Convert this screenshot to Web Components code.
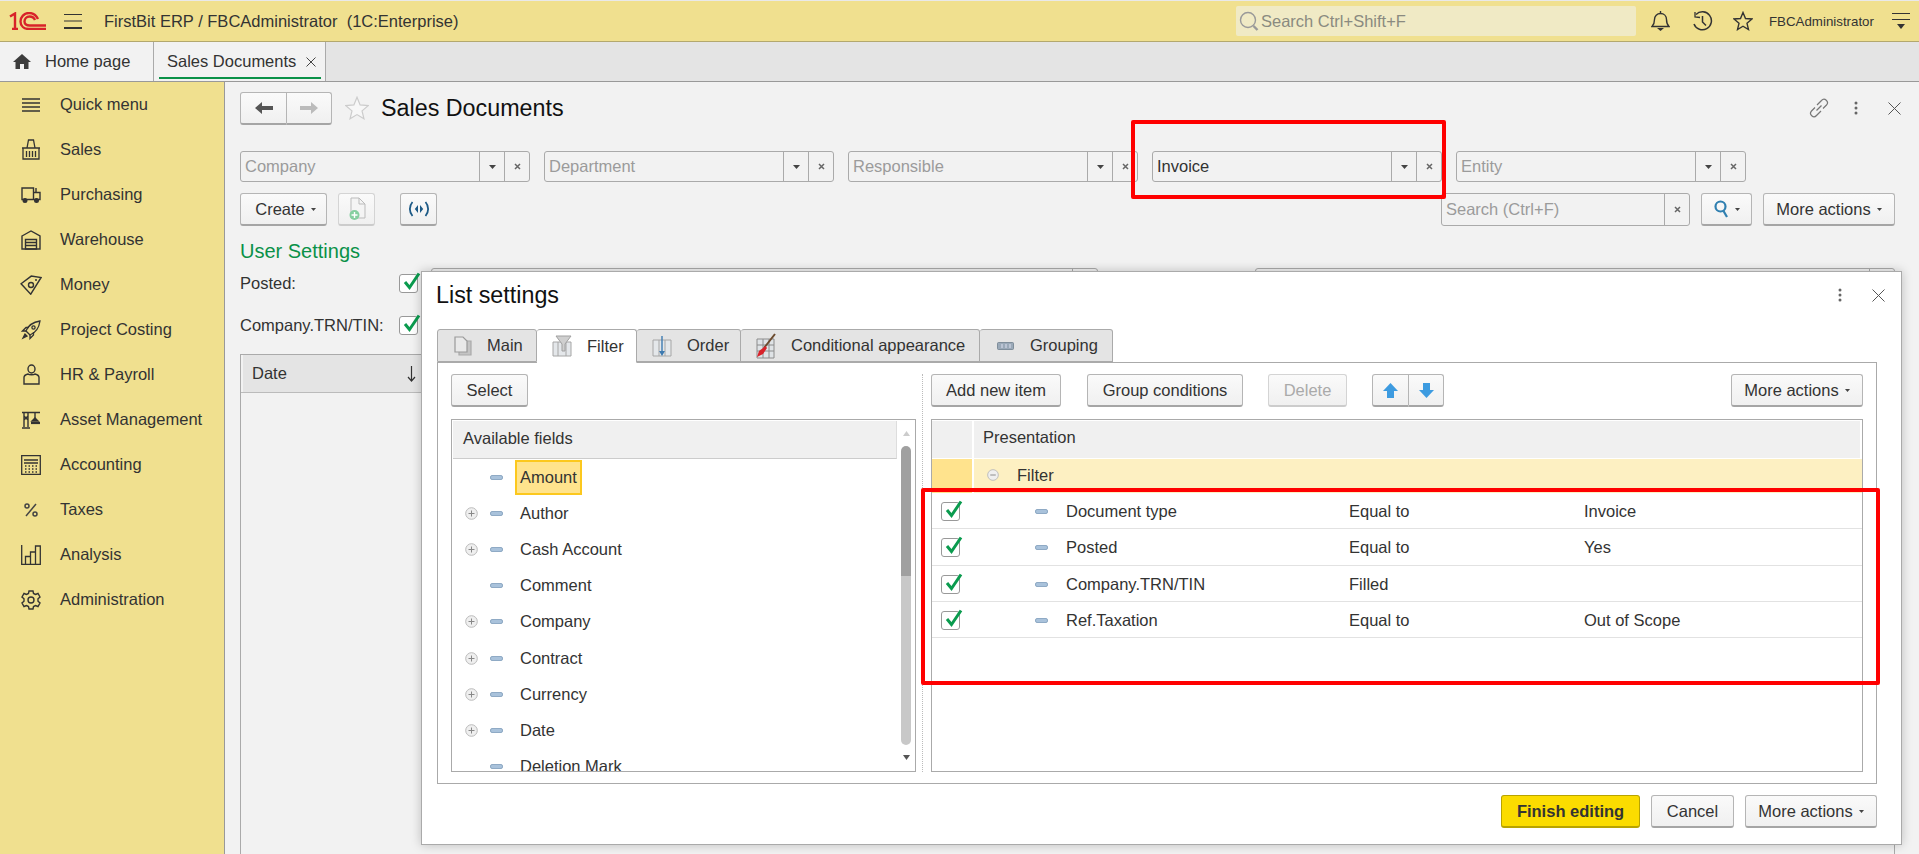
<!DOCTYPE html>
<html lang="en">
<head>
<meta charset="utf-8">
<title>Sales Documents</title>
<style>
    html, body { margin: 0; height: 100%; overflow: hidden; }
    body { font: 16.5px "Liberation Sans", Arial, sans-serif; color: #333; }
</style>
</head>
<body>
<erp-app>
    <erp-header slot="header"></erp-header>
    <erp-tabbar slot="tabs"></erp-tabbar>
    <erp-sidebar slot="side">
        <erp-nav-item icon="list">Quick menu</erp-nav-item>
        <erp-nav-item icon="basket">Sales</erp-nav-item>
        <erp-nav-item icon="truck">Purchasing</erp-nav-item>
        <erp-nav-item icon="warehouse">Warehouse</erp-nav-item>
        <erp-nav-item icon="money">Money</erp-nav-item>
        <erp-nav-item icon="rocket">Project Costing</erp-nav-item>
        <erp-nav-item icon="person">HR &amp; Payroll</erp-nav-item>
        <erp-nav-item icon="crane">Asset Management</erp-nav-item>
        <erp-nav-item icon="calc">Accounting</erp-nav-item>
        <erp-nav-item icon="percent">Taxes</erp-nav-item>
        <erp-nav-item icon="chart">Analysis</erp-nav-item>
        <erp-nav-item icon="gear">Administration</erp-nav-item>
    </erp-sidebar>
    <erp-document slot="main"></erp-document>
    <settings-dialog slot="overlay"></settings-dialog>
    <red-box slot="overlay" style="left:1131px;top:120px;width:315px;height:79px"></red-box>
    <red-box slot="overlay" style="left:921px;top:488px;width:959px;height:197px"></red-box>
</erp-app>

<script>
const icons = {
    logo: `<svg width="37" height="18" viewBox="0 0 37 18" fill="none" stroke="#d8232a" stroke-width="2.400"><path d="M1 4.500 6 1.500V17M3 17H9"/><path d="M29 7C27 3 24 1 20 1 15 1 11.500 5 11.500 9.500 11.500 14 15 17 20 17H37"/><path d="M26 8C25 5.500 23 4.500 20.500 4.500 17.500 4.500 15.500 7 15.500 9.500 15.500 12 17.500 13.500 20.500 13.500H37"/></svg>`,
    burger: `<svg width="18" height="15" viewBox="0 0 18 15" stroke="#333" fill="none"><path d="M0 .5H18M0 7H18"/><path stroke-width="2" d="M0 14H18"/></svg>`,
    search: `<svg width="21" height="21" viewBox="0 0 21 21" fill="none" stroke="#999" stroke-width="1.400"><circle cx="9" cy="9" r="7.500"/><path stroke-width="2.400" d="m14.500 15 4 4"/></svg>`,
    bell: `<svg width="19" height="20" viewBox="0 0 19 20" fill="none" stroke="#333" stroke-width="1.400"><path d="M1 15.500C3 13.500 3.500 11 3.500 8.500 3.500 5 6 2.500 9.500 2.500S15.500 5 15.500 8.500C15.500 11 16 13.500 18 15.500Z"/><path d="M9.500 0v2.500"/><path fill="#333" stroke="none" d="M6 17h7l-3.500 3z"/></svg>`,
    history: `<svg width="21" height="21" viewBox="0 0 21 21" fill="none" stroke="#333" stroke-width="1.500"><path d="M4 3.500A9 9 0 1 1 2 13"/><path d="M3 1v5l5 .5" stroke-width="1.300"/><path d="M10.500 5v6l3.500 3.500"/></svg>`,
    star: `<svg width="20" height="20" viewBox="0 0 20 20" fill="none" stroke="#333" stroke-width="1.400"><path d="M10 1.500 12.500 7.500 19 8 14 12.300 15.500 18.500 10 15.200 4.500 18.500 6 12.300 1 8 7.500 7.500Z"/></svg>`,
    starLight: `<svg width="24" height="24" viewBox="0 0 20 20" fill="#f7f7f7" stroke="#ccc" stroke-width="1"><path d="M10 1 12.600 7.400 19.300 8 14.200 12.400 15.800 19 10 15.500 4.200 19 5.800 12.400 .7 8 7.400 7.400Z"/></svg>`,
    menu: `<svg width="19" height="17" viewBox="0 0 19 17" fill="#333" stroke="#333"><path fill="none" d="M1 .5H19M1 6.500H19"/><path stroke="none" d="M6 11h8l-4 5z"/></svg>`,
    home: `<svg width="18" height="15" viewBox="0 0 18 15" fill="#3c3c3c"><path d="M9 0 18 8H15.500V15H11V10H7V15H2.500V8H0Z"/></svg>`,
    close: `<svg width="10" height="10" viewBox="0 0 10 10" stroke="#444" fill="none"><path d="M.5.5 9.500 9.500M9.500.5.5 9.500"/></svg>`,
    closeBig: `<svg width="13" height="13" viewBox="0 0 13 13" stroke="#555" fill="none"><path d="M.5.5 12.500 12.500M12.500.5.5 12.500"/></svg>`,
    dots: `<svg width="4" height="14" viewBox="0 0 4 14" fill="#666"><circle cx="2" cy="2" r="1.500"/><circle cx="2" cy="7" r="1.500"/><circle cx="2" cy="12" r="1.500"/></svg>`,
    link: `<svg width="20" height="20" viewBox="0 0 20 20" fill="none" stroke="#777" stroke-width="1.200"><path d="M8 7 12.500 2.500A3 3 0 0 1 17.500 7L14 10.500"/><path d="M12 13 7.500 17.500A3 3 0 0 1 2.500 13L6 9.500"/><path d="M7.500 12.500 12.500 7.500"/></svg>`,
    list: `<svg width="18" height="14" viewBox="0 0 18 14" stroke="#333" stroke-width="1.500"><path d="M0 1H18M0 5H18M0 9H18M0 13H18"/></svg>`,
    basket: `<svg width="20" height="21" viewBox="0 0 20 21" fill="none" stroke="#333" stroke-width="1.300"><path d="M1 9H19M2 9V20H18V9"/><path d="M6 9 7.500 1H12.500L14 9"/><path d="M5.500 12V18M8.500 12V18M11.500 12V18M14.500 12V18"/></svg>`,
    truck: `<svg width="20" height="16" viewBox="0 0 20 16" fill="none" stroke="#333" stroke-width="1.400"><path d="M12.500 12.500H1V1H12.500V12.500H19V5.500H12.500M15 1V5.500"/><circle cx="4" cy="13.500" r="1.800" fill="#333"/><circle cx="15.500" cy="13.500" r="1.800" fill="#333"/></svg>`,
    warehouse: `<svg width="20" height="20" viewBox="0 0 20 20" fill="none" stroke="#333" stroke-width="1.400"><path d="M1 6 10 1 19 6V19H1Z"/><path d="M4.500 9.500H15.500V19H4.500ZM4.500 12.500H15.500M4.500 15.500H15.500"/></svg>`,
    money: `<svg width="22" height="20" viewBox="0 0 22 20" fill="none" stroke="#333" stroke-width="1.400"><path d="M1 10 10 1H20L12 19Z" transform="rotate(8 10 10)"/><circle cx="11" cy="10" r="2.500"/><path d="M15 5h2"/></svg>`,
    rocket: `<svg width="20" height="20" viewBox="0 0 20 20" fill="none" stroke="#333" stroke-width="1.300"><path d="M7 13 5 11C7 6 12 2 19 1 18 8 14 13 9 15Z"/><path d="M5 11H1.500L5 7.500H8M9 15V18.500L12.500 15V12"/><circle cx="12.500" cy="7.500" r="1.600"/><path fill="#333" d="M4 14 2 18 6 16Z"/></svg>`,
    person: `<svg width="17" height="21" viewBox="0 0 17 21" fill="none" stroke="#333" stroke-width="1.400"><ellipse cx="8.500" cy="5" rx="3.500" ry="4"/><path d="M1 20V13.500C1 11.500 3 10.500 5 10 6 11 11 11 12 10 14 10.500 16 11.500 16 13.500V20Z"/></svg>`,
    crane: `<svg width="20" height="18" viewBox="0 0 20 18" fill="none" stroke="#333" stroke-width="1.400"><path d="M1 1.500H19M3 1.500V16M7 1.500V16M1 17H9M3 5 7 9M7 5 3 9"/><path d="M14 1.500V7" /><path fill="#333" d="M11 10 14 7 17 10Z"/><path stroke-width="2.200" d="M10 12H19"/></svg>`,
    calc: `<svg width="20" height="20" viewBox="0 0 20 20" fill="none" stroke="#333" stroke-width="1.300"><path d="M.7.7H19.300V19.300H.7ZM3 5H17M3 8H17"/><path stroke-dasharray="1.500 2" stroke-width="1.500" d="M4 11H17M4 14H17M4 17H17"/></svg>`,
    percent: `<svg width="14" height="14" viewBox="0 0 14 14" fill="none" stroke="#444" stroke-width="1.500"><circle cx="3" cy="3" r="2"/><circle cx="11" cy="11" r="2"/><path d="M12 1 2 13"/></svg>`,
    chart: `<svg width="20" height="20" viewBox="0 0 20 20" fill="none" stroke="#333" stroke-width="1.300"><path d="M.7 0V19.300H19.300V1H14.500V19.300M14.500 7H9.500V19.300M9.500 11.500H4.500V19.300"/></svg>`,
    gear: `<svg width="20" height="20" viewBox="0 0 20 20" fill="none" stroke="#333" stroke-width="1.400"><path d="M8 1H12L12.500 3.500 14.500 4.500 17 3.500 19 7 17 8.700V11.300L19 13 17 16.500 14.500 15.500 12.500 16.500 12 19H8L7.500 16.500 5.500 15.500 3 16.500 1 13 3 11.300V8.700L1 7 3 3.500 5.500 4.500 7.500 3.500Z"/><circle cx="10" cy="10" r="3"/></svg>`,
    caret: `<svg width="7" height="4" viewBox="0 0 7 4" fill="#444"><path d="M0 0H7L3.500 4Z"/></svg>`,
    caretSm: `<svg width="5" height="3" viewBox="0 0 5 3" fill="#444"><path d="M0 0H5L2.500 3Z"/></svg>`,
    mini: `<svg width="7" height="7" viewBox="0 0 7 7" stroke="#666" stroke-width="1.500" fill="none"><path d="M1 1 6 6M6 1 1 6"/></svg>`,
    back: `<svg width="18" height="12" viewBox="0 0 18 12" fill="#555"><path d="M0 6 7 0V4H18V8H7V12Z"/></svg>`,
    forward: `<svg width="18" height="12" viewBox="0 0 18 12" fill="#bbb"><path d="M18 6 11 0V4H0V8H11V12Z"/></svg>`,
    docAdd: `<svg width="18" height="24" viewBox="0 0 18 24" fill="none"><path d="M3 1H11L17 7V21H3Z" stroke="#bbb" fill="#f4f4f4"/><path d="M11 1V7H17" stroke="#bbb"/><circle cx="6.500" cy="18" r="5" fill="#86cfa0"/><path d="M6.500 15V21M3.500 18H9.500" stroke="#fff" stroke-width="1.400"/></svg>`,
    signal: `<svg width="22" height="16" viewBox="0 0 22 16" fill="none" stroke="#1d5a86" stroke-width="1.800"><path d="M4.500 1C1 5 1 11 4.500 15M17.500 1C21 5 21 11 17.500 15"/><path fill="#1d5a86" stroke="none" d="M10 4 6.800 8 10 12ZM12 4 15.200 8 12 12Z"/></svg>`,
    magnifier: `<svg width="15" height="18" viewBox="0 0 15 18" fill="none" stroke="#2f7fb0" stroke-width="2.200"><circle cx="6.500" cy="6.500" r="5"/><path d="m9.500 11 3.500 6"/></svg>`,
    sortDown: `<svg width="9" height="16" viewBox="0 0 9 16" fill="none" stroke="#333" stroke-width="1.200"><path d="M4.500 0V15M1 11 4.500 15 8 11"/></svg>`,
    tabMain: `<svg width="18" height="20" viewBox="0 0 18 20" fill="#e9e9e9" stroke="#9a9a9a" stroke-width="1.200"><path d="M5 5H17V19H5Z" fill="#c4c4c4" stroke="#aaa"/><path d="M1 1H9L13 5V16H1Z"/></svg>`,
    tabFilter: `<svg width="20" height="22" viewBox="0 0 20 22" fill="#e4e7ea" stroke="#a6a6a6"><path d="M1 7H19V21H1ZM6 7V21M14 7V21"/><path fill="#cfcfcf" stroke="#a0a0a0" d="M4 1H19L13 9V16H10V9Z"/></svg>`,
    tabOrder: `<svg width="20" height="22" viewBox="0 0 20 22" fill="#e4e7ea" stroke="#a6a6a6"><path d="M1 5H19V21H1ZM7 5V21M13 5V21"/><path stroke="#3d7ab0" stroke-width="1.400" fill="none" d="M10 1V19"/><path fill="#3d7ab0" stroke="none" d="M7 16H13L10 21Z"/></svg>`,
    tabCond: `<svg width="20" height="26" viewBox="0 0 20 26" fill="#dfe3e6" stroke="#8c8c8c"><path d="M1 6H18V25H1ZM7 6V25M13 6V25M1 12H18M1 18H18"/><path stroke="#6b4a2d" stroke-width="2" fill="none" d="M19 1 8 15"/><path fill="#d8222a" stroke="none" d="M9.500 13 3 18 1 24 7 21 11 15Z"/></svg>`,
    tabGroup: `<svg width="17" height="8" viewBox="0 0 17 8" fill="#9aa9b8" stroke="#6f7f8e" stroke-width=".8"><rect x=".5" y=".5" width="16" height="7" rx="1"/><path stroke="#eef" d="M5 2V6M9 2V6M13 2V6"/></svg>`,
    plus: `<svg width="13" height="13" viewBox="0 0 13 13" fill="#efefef" stroke="#bbb"><circle cx="6.500" cy="6.500" r="5.800"/><path stroke="#888" d="M6.500 3.500V9.500M3.500 6.500H9.500"/></svg>`,
    minus: `<svg width="12" height="12" viewBox="0 0 13 13" fill="#efefef" stroke="#bbb"><circle cx="6.500" cy="6.500" r="5.800"/><path stroke="#888" d="M3.500 6.500H9.500"/></svg>`,
    dash: `<svg width="13" height="5" viewBox="0 0 13 5" fill="#a9c2db" stroke="#7d9cba" stroke-width=".8"><rect x=".5" y=".5" width="12" height="4" rx="1.500"/></svg>`,
    up: `<svg width="15" height="15" viewBox="0 0 15 15" fill="#3d9be0"><path d="M7.500 0 15 8H11V15H4V8H0Z"/></svg>`,
    down: `<svg width="15" height="15" viewBox="0 0 15 15" fill="#3d9be0"><path d="M7.500 15 15 7H11V0H4V7H0Z"/></svg>`,
    check: `<svg width="18" height="19" viewBox="0 0 18 19" fill="none" stroke="#0a9b4e" stroke-width="3"><path d="M2 10 6.500 15.500 16 1.500"/></svg>`,
    scrollUp: `<svg width="7" height="5" viewBox="0 0 7 5" fill="#ccc"><path d="M0 5H7L3.500 0Z"/></svg>`,
    scrollDown: `<svg width="7" height="5" viewBox="0 0 7 5" fill="#555"><path d="M0 0H7L3.500 5Z"/></svg>`,
};

class ShadowEl extends HTMLElement {
    constructor() {
        super();
        this.attachShadow({ mode: "open" });
    }
    connectedCallback() {
        this.shadowRoot.innerHTML = `<style>${this.styles()}</style>${this.markup()}`;
    }
    styles() { return ":host { display: block; }"; }
    markup() { return "<slot></slot>"; }
}

class ErpApp extends ShadowEl {
    styles() {
        return `
            :host { display: flex; flex-direction: column; position: relative; height: 854px; overflow: hidden;
                padding-top: 1px; box-sizing: border-box; background: #e9e9e9; }
            .body { flex: 1; display: flex; min-height: 0; }
        `;
    }
    markup() {
        return `<slot name="header"></slot><slot name="tabs"></slot>
            <div class="body"><slot name="side"></slot><slot name="main"></slot></div>
            <slot name="overlay"></slot>`;
    }
}

class ErpHeader extends ShadowEl {
    styles() {
        return `
            :host { display: flex; align-items: center; height: 41px; box-sizing: border-box; background: #f0e08f;
                border-bottom: 1px solid #b3a86e; padding: 0 9px; color: #333; }
            svg { display: block; flex: none; }
            .burger { margin-left: 18px; }
            .title { margin-left: 22px; white-space: pre; }
            .search { margin-left: auto; width: 400px; height: 30px; background: #f0eac5; border-radius: 2px; display: flex;
                align-items: center; padding-left: 3px; box-sizing: border-box; color: #8a8a80; gap: 1px; }
            .bell { margin-left: 15px; }
            .history { margin-left: 22px; }
            .star { margin-left: 20px; }
            .user { margin-left: 16px; font-size: 13.300px; width: 122px; white-space: nowrap; }
        `;
    }
    markup() {
        return `${icons.logo}<span class="burger">${icons.burger}</span>
            <span class="title">FirstBit ERP / FBCAdministrator  (1C:Enterprise)</span>
            <div class="search">${icons.search}<span>Search Ctrl+Shift+F</span></div>
            <span class="bell">${icons.bell}</span><span class="history">${icons.history}</span>
            <span class="star">${icons.star}</span><span class="user">FBCAdministrator</span>${icons.menu}`;
    }
}

class ErpTabbar extends ShadowEl {
    styles() {
        return `
            :host { display: flex; height: 40px; box-sizing: border-box; background: #e4e4e4; border-bottom: 1px solid #999; }
            .tab { display: flex; align-items: center; background: #f2f2f2; border-right: 1px solid #aaa; box-sizing: border-box; position: relative; }
            .home { width: 154px; padding-left: 13px; gap: 14px; }
            .docs { width: 172px; padding-left: 13px; gap: 10px; }
            .docs::after { content: ""; position: absolute; left: 5px; right: 4px; bottom: 2px; height: 2px; background: #0a9148; }
        `;
    }
    markup() {
        return `<div class="tab home">${icons.home}<span>Home page</span></div>
            <div class="tab docs"><span>Sales Documents</span>${icons.close}</div>`;
    }
}

class ErpSidebar extends ShadowEl {
    styles() {
        return `:host { display: block; flex: none; width: 225px; box-sizing: border-box; background: #f0e08f; border-right: 1px solid #999; }`;
    }
}

class ErpNavItem extends ShadowEl {
    styles() {
        return `
            :host { display: flex; align-items: center; height: 45px; padding-left: 20px; gap: 18px; }
            .ico { width: 22px; display: flex; justify-content: center; }
            svg { display: block; }
        `;
    }
    markup() {
        return `<span class="ico">${icons[this.getAttribute("icon")]}</span><slot></slot>`;
    }
}

class ErpButton extends ShadowEl {
    styles() {
        const w = this.getAttribute("width");
        return `
            :host { display: flex; align-items: center; justify-content: center; flex: none; height: 33px; box-sizing: border-box;
                ${w ? `width: ${w}px;` : ""} gap: 6px; white-space: nowrap; color: #333;
                background: linear-gradient(#fafafa, #f0f0f0); border: 1px solid #b5b5b5; border-bottom: 2px solid #a5a5a5; border-radius: 3px; }
            :host([disabled]) { color: #aaa; border-color: #d4d4d4; border-bottom-color: #ccc; }
            :host([primary]) { background: #fbdc00; border-color: #b8a300; font-weight: 700; }
            svg { display: block; }
        `;
    }
    markup() {
        return `<slot></slot>${this.hasAttribute("caret") ? icons.caretSm : ""}`;
    }
}

class ErpField extends ShadowEl {
    styles() {
        const w = this.getAttribute("width") || 290;
        return `
            :host { display: flex; flex: none; width: ${w}px; height: 31px; box-sizing: border-box; border: 1px solid #aaa; border-radius: 3px; }
            .text { flex: 1; display: flex; align-items: center; padding-left: 4px; color: #9b9b9b; }
            :host([filled]) .text { color: #333; }
            .btn { width: 25px; display: flex; align-items: center; justify-content: center; border-left: 1px solid #aaa; box-sizing: border-box; }
        `;
    }
    markup() {
        const drop = this.hasAttribute("nodrop") ? "" : `<span class="btn">${icons.caret}</span>`;
        return `<span class="text">${this.getAttribute("label") || ""}</span>${drop}<span class="btn">${icons.mini}</span>`;
    }
}

class ErpCheck extends ShadowEl {
    styles() {
        return `
            :host { display: block; flex: none; width: 19px; height: 19px; box-sizing: border-box; position: relative; background: #fff;
                border: 1px solid #999; border-radius: 3px; }
            svg { position: absolute; left: 3px; top: -3px; }
        `;
    }
    markup() { return icons.check; }
}

class ErpDocument extends ShadowEl {
    styles() {
        return `
            :host { display: flex; flex-direction: column; flex: 1; min-width: 0; box-sizing: border-box; background: #f2f2f2;
                padding: 11px 24px 0 15px; }
            svg { display: block; }
            .head { display: flex; align-items: center; height: 30px; }
            .nav { display: flex; }
            .nav erp-button:first-child { border-radius: 3px 0 0 3px; }
            .nav erp-button:last-child { border-radius: 0 3px 3px 0; border-left: 0; }
            .fav { margin-left: 13px; }
            h1 { margin: 0 0 0 12px; font: 400 23.300px "Liberation Sans", Arial, sans-serif; color: #111; }
            .tools { margin-left: auto; margin-right: -6px; display: flex; align-items: center; }
            .tools svg:nth-child(2) { margin: 0 30px 0 25px; }
            .row { display: flex; gap: 14px; margin-top: 28px; }
            .actions { display: flex; align-items: center; margin-top: 11px; }
            .actions .right { margin-left: auto; display: flex; align-items: center; gap: 11px; }
            h2 { margin: 14px 0 0; font: 400 20px/22px "Liberation Sans", Arial, sans-serif; color: #0a9148; }
            .set { display: flex; align-items: center; height: 33px; }
            .set span { width: 159px; }
        `;
    }
    markup() {
        return `
            <div class="head">
                <div class="nav"><erp-button width="47">${icons.back}</erp-button><erp-button width="45">${icons.forward}</erp-button></div>
                <span class="fav">${icons.starLight}</span>
                <h1>Sales Documents</h1>
                <div class="tools">${icons.link}${icons.dots}${icons.closeBig}</div>
            </div>
            <div class="row">
                <erp-field label="Company"></erp-field>
                <erp-field label="Department"></erp-field>
                <erp-field label="Responsible"></erp-field>
                <erp-field label="Invoice" filled></erp-field>
                <erp-field label="Entity"></erp-field>
            </div>
            <div class="actions">
                <erp-button width="87" caret style="padding-left:4px">Create</erp-button>
                <erp-button width="37" disabled style="margin-left:11px">${icons.docAdd}</erp-button>
                <erp-button width="37" style="margin-left:25px">${icons.signal}</erp-button>
                <div class="right">
                    <erp-field label="Search (Ctrl+F)" width="249" nodrop style="height:33px"></erp-field>
                    <erp-button width="51" caret>${icons.magnifier}</erp-button>
                    <erp-button width="132" caret>More actions</erp-button>
                </div>
            </div>
            <h2>User Settings</h2>
            <div class="set" style="margin-top:5px">
                <span>Posted:</span><erp-check></erp-check>
                <erp-field width="667" nodrop style="margin-left:13px"></erp-field>
                <erp-field width="640" nodrop style="margin-left:157px"></erp-field>
            </div>
            <div class="set" style="margin-top:9px"><span>Company.TRN/TIN:</span><erp-check></erp-check></div>
            <erp-list style="margin-top:12px"></erp-list>
        `;
    }
}

class ErpList extends ShadowEl {
    styles() {
        return `
            :host { display: block; flex: 1; border: 1px solid #aaa; border-bottom: 0; padding-left: 2px; }
            .cell { width: 300px; height: 37px; box-sizing: border-box; background: #e4e4e4; display: flex; align-items: center; padding-left: 9px; }
            .cell span { width: 155px; }
            hr { margin: 0 0 0 -2px; border: 0; border-top: 1px solid #bbb; }
        `;
    }
    markup() {
        return `<div class="cell"><span>Date</span>${icons.sortDown}</div><hr>`;
    }
}

class SettingsDialog extends ShadowEl {
    styles() {
        return `
            :host { display: flex; flex-direction: column; position: absolute; left: 421px; top: 271px; width: 1481px; height: 574px;
                box-sizing: border-box; background: #fff; border: 1px solid #aaa; box-shadow: 0 0 10px rgba(0,0,0,.22); }
            svg { display: block; }
            .top { display: flex; align-items: center; height: 46px; margin-bottom: 11px; padding: 0 16px 0 14px; flex: none; }
            h1 { margin: 0; font: 400 23.300px "Liberation Sans", Arial, sans-serif; color: #111; }
            .tools { margin-left: auto; display: flex; align-items: center; gap: 30px; }
            .tabs { display: flex; margin-left: 15px; flex: none; position: relative; z-index: 1; }
            .tab { display: flex; align-items: center; height: 33px; box-sizing: border-box; background: #e4e4e4; border: 1px solid #aaa;
                border-left: 0; border-radius: 3px 3px 0 0; }
            .tab:first-child { border-left: 1px solid #aaa; }
            .tab.on { background: #fff; border-bottom-color: #fff; height: 34px; margin-bottom: -1px; }
            .tab .ico { display: flex; justify-content: center; flex: none; }
            .panel { flex: none; height: 422px; margin: 0 24px 0 15px; border: 1px solid #aaa; box-sizing: border-box; padding: 11px 13px;
                display: grid; grid-template-columns: 465px 15px 1fr; }
            .col { display: flex; flex-direction: column; gap: 12px; min-height: 0; min-width: 0; }
            .split { border-left: 1px dotted #bbb; margin-left: 6px; }
            .bar { display: flex; }
            .spacer { margin-left: auto; }
            .arrows { display: flex; margin-left: 25px; }
            .arrows erp-button:first-child { border-radius: 3px 0 0 3px; }
            .arrows erp-button:last-child { border-radius: 0 3px 3px 0; border-left: 0; }
            .foot { display: flex; justify-content: flex-end; gap: 11px; margin-top: 11px; padding-right: 24px; }
            .foot erp-button { padding-top: 1px; }
        `;
    }
    markup() {
        const tab = (icon, label, w, ico, on) =>
            `<div class="tab${on ? " on" : ""}" style="width:${w}px"><span class="ico" style="width:${ico}px">${icons[icon]}</span><span>${label}</span></div>`;
        return `
            <div class="top"><h1>List settings</h1><div class="tools">${icons.dots}${icons.closeBig}</div></div>
            <div class="tabs">
                ${tab("tabMain", "Main", 100, 49, false)}
                ${tab("tabFilter", "Filter", 100, 50, true)}
                ${tab("tabOrder", "Order", 104, 50, false)}
                ${tab("tabCond", "Conditional appearance", 239, 50, false)}
                ${tab("tabGroup", "Grouping", 133, 50, false)}
            </div>
            <div class="panel">
                <div class="col">
                    <div class="bar"><erp-button width="77">Select</erp-button></div>
                    <field-tree></field-tree>
                </div>
                <div class="split"></div>
                <div class="col">
                    <div class="bar">
                        <erp-button width="130">Add new item</erp-button>
                        <erp-button width="156" style="margin-left:26px">Group conditions</erp-button>
                        <erp-button width="79" disabled style="margin-left:25px">Delete</erp-button>
                        <div class="arrows"><erp-button width="37">${icons.up}</erp-button><erp-button width="35">${icons.down}</erp-button></div>
                        <erp-button width="132" caret class="spacer">More actions</erp-button>
                    </div>
                    <filter-grid></filter-grid>
                </div>
            </div>
            <div class="foot">
                <erp-button width="139" primary>Finish editing</erp-button>
                <erp-button width="83">Cancel</erp-button>
                <erp-button width="132" caret>More actions</erp-button>
            </div>
        `;
    }
}

class FieldTree extends ShadowEl {
    styles() {
        return `
            :host { display: grid; grid-template-columns: 1fr 18px; grid-template-rows: 39px 1fr; flex: 1; min-height: 0; overflow: hidden;
                border: 1px solid #aaa; }
            svg { display: block; }
            .head { background: #f0f0f0; border-bottom: 1px solid #ccc; border-right: 1px solid #ddd; display: flex; align-items: center;
                padding: 0 0 2px 10px; box-sizing: border-box; margin: 1px 0 0 1px; }
            .rows { overflow: hidden; min-height: 0; }
            .row { display: flex; align-items: center; height: 36.200px; padding-left: 13px; white-space: nowrap; }
            .exp { width: 13px; flex: none; }
            .dash { margin-left: 12px; flex: none; }
            .name { margin-left: 12px; padding: 0 5px; line-height: 35px; }
            .name.on { background: #ffe38d; border: 2px solid #fcc81e; padding: 0 3px; line-height: 31px; }
            .scroll { grid-column: 2; grid-row: 1 / 3; display: flex; flex-direction: column; align-items: center; padding-top: 11px; }
            .thumb { width: 10px; margin-left: -1px; }
            .dark { height: 130px; background: #a0a0a0; border-radius: 5px 5px 0 0; margin-top: 10px; }
            .light { height: 169px; background: #c8c8c8; border-radius: 0 0 5px 5px; margin-bottom: 10px; }
        `;
    }
    markup() {
        const names = [["Amount", 0], ["Author", 1], ["Cash Account", 1], ["Comment", 0], ["Company", 1],
            ["Contract", 1], ["Currency", 1], ["Date", 1], ["Deletion Mark", 0]];
        const rows = names.map(([name, exp], i) => `
            <div class="row"><span class="exp">${exp ? icons.plus : ""}</span><span class="dash">${icons.dash}</span>
            <span class="name${i === 0 ? " on" : ""}">${name}</span></div>`).join("");
        return `<div class="head">Available fields</div>
            <div class="scroll">${icons.scrollUp}<div class="thumb dark"></div><div class="thumb light"></div>${icons.scrollDown}</div>
            <div class="rows">${rows}</div>`;
    }
}

class FilterGrid extends ShadowEl {
    styles() {
        return `
            :host { display: block; flex: 1; min-height: 0; overflow: hidden; border: 1px solid #aaa; }
            svg { display: block; }
            .split { display: grid; grid-template-columns: 40px 1fr; column-gap: 2px; }
            .head > div { background: #f0f0f0; height: 37px; box-sizing: border-box; display: flex; align-items: center; margin: 1px 0 1px; }
            .head > div + div { padding: 0 0 4px 9px; margin-right: 2px; }
            .group > div { height: 34px; box-sizing: border-box; display: flex; align-items: center; }
            .group .cell-a { background: #ffe38d; }
            .group .cell-b { background: #fdf0c2; padding: 0 0 2px 13px; gap: 18px; }
            .row { display: grid; grid-template-columns: 41px 62px 31px 283px 235px 1fr; align-items: center; height: 36.300px;
                box-sizing: border-box; border-bottom: 1px solid #e2e2e2; padding-top: 2px; }
            .row erp-check { margin-left: 9px; }
        `;
    }
    markup() {
        const rows = [["Document type", "Equal to", "Invoice"], ["Posted", "Equal to", "Yes"],
            ["Company.TRN/TIN", "Filled", ""], ["Ref.Taxation", "Equal to", "Out of Scope"]];
        return `
            <div class="split head"><div></div><div>Presentation</div></div>
            <div class="split group"><div class="cell-a"></div><div class="cell-b">${icons.minus}<span>Filter</span></div></div>
            ${rows.map(([f, c, v]) => `<div class="row"><erp-check></erp-check><span></span><span>${icons.dash}</span>
                <span>${f}</span><span>${c}</span><span>${v}</span></div>`).join("")}
        `;
    }
}

class RedBox extends ShadowEl {
    styles() {
        return `:host { display: block; position: absolute; box-sizing: border-box; border: 4px solid #f00; border-radius: 2px; pointer-events: none; }`;
    }
    markup() { return ""; }
}

customElements.define("erp-app", ErpApp);
customElements.define("erp-header", ErpHeader);
customElements.define("erp-tabbar", ErpTabbar);
customElements.define("erp-sidebar", ErpSidebar);
customElements.define("erp-nav-item", ErpNavItem);
customElements.define("erp-button", ErpButton);
customElements.define("erp-field", ErpField);
customElements.define("erp-check", ErpCheck);
customElements.define("erp-list", ErpList);
customElements.define("erp-document", ErpDocument);
customElements.define("field-tree", FieldTree);
customElements.define("filter-grid", FilterGrid);
customElements.define("settings-dialog", SettingsDialog);
customElements.define("red-box", RedBox);
</script>
</body>
</html>
